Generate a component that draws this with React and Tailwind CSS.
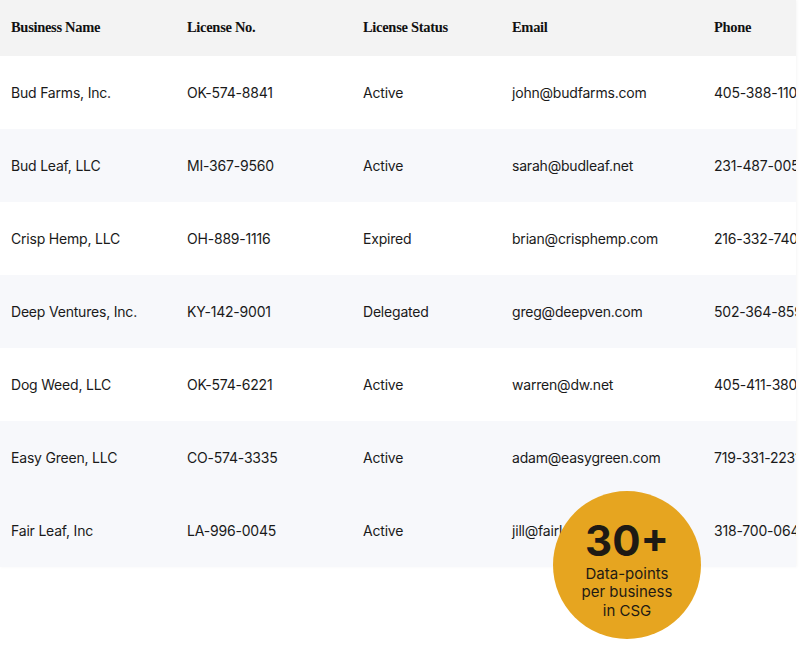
import React from "react";

const rows = [
  ["Bud Farms, Inc.", "OK-574-8841", "Active", "john@budfarms.com", "405-388-1102", false],
  ["Bud Leaf, LLC", "MI-367-9560", "Active", "sarah@budleaf.net", "231-487-0051", true],
  ["Crisp Hemp, LLC", "OH-889-1116", "Expired", "brian@crisphemp.com", "216-332-7401", false],
  ["Deep Ventures, Inc.", "KY-142-9001", "Delegated", "greg@deepven.com", "502-364-8591", true],
  ["Dog Weed, LLC", "OK-574-6221", "Active", "warren@dw.net", "405-411-3802", false],
  ["Easy Green, LLC", "CO-574-3335", "Active", "adam@easygreen.com", "719-331-2231", true],
  ["Fair Leaf, Inc", "LA-996-0045", "Active", "jill@fairleaf.com", "318-700-0641", true],
];

const cols = ["w-[176px]", "w-[176px]", "w-[149px]", "w-[202px]", "w-[120px]"];

export default function App() {
  return (
    <div className="relative w-[800px] h-[664px] bg-white overflow-hidden">
      <div className="w-[796px] overflow-hidden shadow-[1px_0_3px_rgba(0,0,0,0.04)]">
        <div className="flex h-[56px] items-center bg-[#f3f3f3] pl-[11px] font-['Liberation_Serif',serif] font-bold text-[14.5px] text-[#111] tracking-[-0.3px] whitespace-nowrap">
          {["Business Name", "License No.", "License Status", "Email", "Phone"].map((h, i) => (
            <div key={h} className={`${cols[i]} shrink-0`}>{h}</div>
          ))}
        </div>
        {rows.map((r) => (
          <div
            key={r[0]}
            className={`flex h-[73px] items-center pl-[11px] font-['Inter',sans-serif] text-[14px] tracking-[-0.2px] text-[#1a1a1a] whitespace-nowrap ${r[5] ? "bg-[#f7f8fb]" : "bg-white"}`}
          >
            {r.slice(0, 5).map((c, i) => (
              <div key={i} className={`${cols[i]} shrink-0`}>{c}</div>
            ))}
          </div>
        ))}
      </div>
      <div className="absolute left-[553px] top-[491px] w-[148px] h-[148px] rounded-full bg-[#e6a520] flex flex-col items-center justify-center pt-[10px] font-['Inter',sans-serif] text-[#1e1a14]">
        <div className="text-[42px] font-bold leading-[42px]">30+</div>
        <div className="text-[15px] leading-[18.5px] text-center mt-[3px]">
          Data-points<br />per business<br />in CSG
        </div>
      </div>
    </div>
  );
}
